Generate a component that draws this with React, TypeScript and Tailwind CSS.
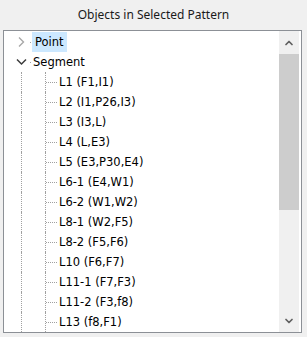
import { ChevronDown, ChevronUp } from "lucide-react";

const segments = [
  "L1 (F1,I1)",
  "L2 (I1,P26,I3)",
  "L3 (I3,L)",
  "L4 (L,E3)",
  "L5 (E3,P30,E4)",
  "L6-1 (E4,W1)",
  "L6-2 (W1,W2)",
  "L8-1 (W2,F5)",
  "L8-2 (F5,F6)",
  "L10 (F6,F7)",
  "L11-1 (F7,F3)",
  "L11-2 (F3,f8)",
  "L13 (f8,F1)",
];

const App = () => {
  return (
    <div className="w-[307px] h-[337px] bg-[#f0f0f0] font-['Noto_Sans',sans-serif] text-[12px] text-[#1a1a1a] overflow-hidden">
      {/* ===== Title ===== */}
      <div className="h-[30px] flex items-center justify-center pb-[1px]">
        Objects in Selected Pattern
      </div>

      {/* ===== Tree box ===== */}
      <div className="ml-[3px] w-[299px] h-[303px] border border-[#8c9096] bg-white flex pr-[2px] overflow-hidden">
        <div className="flex-1 pt-[1px] pl-[1px] overflow-hidden leading-5 font-['DejaVu_Sans',sans-serif] text-[11.5px] text-black">
          {/* Point (collapsed, selected) */}
          <div className="flex h-5 items-center">
            <span className="w-[10px]" />
            <svg width="12" height="12" viewBox="0 0 12 12" className="shrink-0">
              <path d="M4 1.5 L8.5 6 L4 10.5" fill="none" stroke="#a8a8a8" strokeWidth="1.4" />
            </svg>
            <span className="w-[3px]" />
            <span className="w-px h-px bg-[#a0a0a0]" />
            <span className="ml-px h-5 px-[3px] bg-[#cce8ff]">Point</span>
          </div>

          {/* Segment (expanded) */}
          <div className="flex h-5 items-center">
            <span className="w-[10px]" />
            <svg width="12" height="12" viewBox="0 0 12 12" className="shrink-0">
              <path d="M2 3.5 L6.5 8 L11 3.5" fill="none" stroke="#3c3c3c" strokeWidth="1.5" />
            </svg>
            <span className="w-[3px]" />
            <span className="w-px h-px bg-[#a0a0a0]" />
            <span className="ml-px px-[1px]">Segment</span>
          </div>

          {segments.map((s) => (
            <div key={s} className="flex h-5 items-center">
              <span className="w-[16px] shrink-0" />
              <span className="w-[24px] h-5 shrink-0 border-l border-dotted border-[#a0a0a0]" />
              <span className="w-[14px] h-5 shrink-0 border-l border-dotted border-[#a0a0a0] flex items-center">
                <span className="w-[11px] border-t border-dotted border-[#a0a0a0]" />
              </span>
              <span className="whitespace-nowrap">{s}</span>
            </div>
          ))}
        </div>

        {/* ===== Scrollbar ===== */}
        <div className="w-[20px] shrink-0 bg-[#f0f0f0] flex flex-col">
          <div className="h-[23px] flex items-center justify-center text-[#606060]">
            <ChevronUp size={12} strokeWidth={3.5} />
          </div>
          <div className="h-[156px] bg-[#cdcdcd]" />
          <div className="flex-1" />
          <div className="h-[22px] flex items-center justify-center text-[#606060]">
            <ChevronDown size={12} strokeWidth={3.5} />
          </div>
        </div>
      </div>
    </div>
  );
};

export default App;
